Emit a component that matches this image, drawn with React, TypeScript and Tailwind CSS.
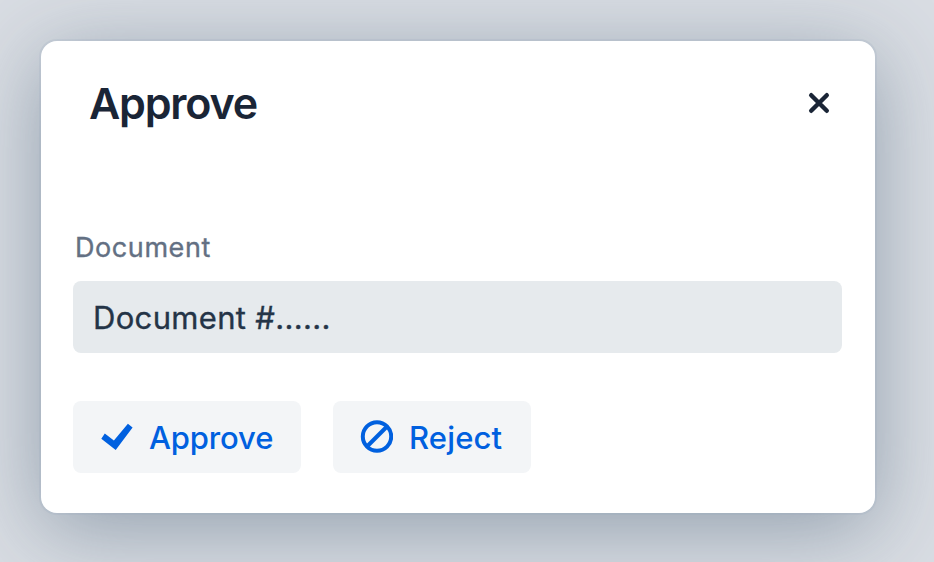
export default function App() {
  return (
    <div className="flex h-[562px] w-[934px] overflow-hidden bg-[#d9dde3] pl-[41px] pt-[41px] font-['Inter',sans-serif]">
      <section className="flex h-[472px] w-[834px] shrink-0 flex-col rounded-2xl bg-white px-8 shadow-[0_0_0_2px_rgba(143,164,184,0.16),0_16px_84px_rgba(66,90,112,0.47)]">
        <header className="flex h-[124px] items-center justify-between pl-4 pr-[13px]">
          <h1 className="text-[43px] font-semibold leading-none tracking-[-1.2px] text-[#1a2536]">Approve</h1>
          <button aria-label="Close">
            <svg className="block" width="22" height="22" viewBox="0 0 22 22" fill="none" stroke="#1a2536" strokeWidth="4.4" strokeLinecap="round"><path d="M3.2 3.2L18.8 18.8M18.8 3.2L3.2 18.8" /></svg>
          </button>
        </header>
        <label className="mt-[65px] pl-0.5 text-[27px] leading-9 tracking-[0.58px] text-[#637083] [-webkit-text-stroke:0.35px_#637083]">Document</label>
        <div className="mt-[15px] flex h-[72px] w-[769px] items-center rounded-lg bg-[#e6eaed] pl-5 pt-0.5 text-[31px] tracking-[0.32px] text-[#243447] [-webkit-text-stroke:0.35px_#243447]">Document #......</div>
        <div className="mt-12 flex gap-8 text-[31px] font-medium text-[#0060df]">
          <button className="flex h-[72px] w-[228px] items-center rounded-lg bg-[#f3f5f7] pl-7 pt-0.5 tracking-[-0.15px]">
            <svg className="mb-0.5 mr-4" width="32" height="28" viewBox="0 0 32 28" fill="currentColor"><path d="M0.3 15.7L3.8 10.6L12.9 17.6L26.9 0.7L31.6 4.5L14.7 27Z" /></svg>
            Approve
          </button>
          <button className="flex h-[72px] w-[198px] items-center rounded-lg bg-[#f3f5f7] pl-[27px] pt-0.5 tracking-[0.15px]">
            <svg className="mb-[3px] mr-4" width="33" height="33" viewBox="0 0 33 33" fill="none" stroke="currentColor" strokeWidth="4"><circle cx="17" cy="16.5" r="14.2" /><path d="M7 26.5L27 6.5" /></svg>
            Reject
          </button>
        </div>
      </section>
    </div>
  );
}
